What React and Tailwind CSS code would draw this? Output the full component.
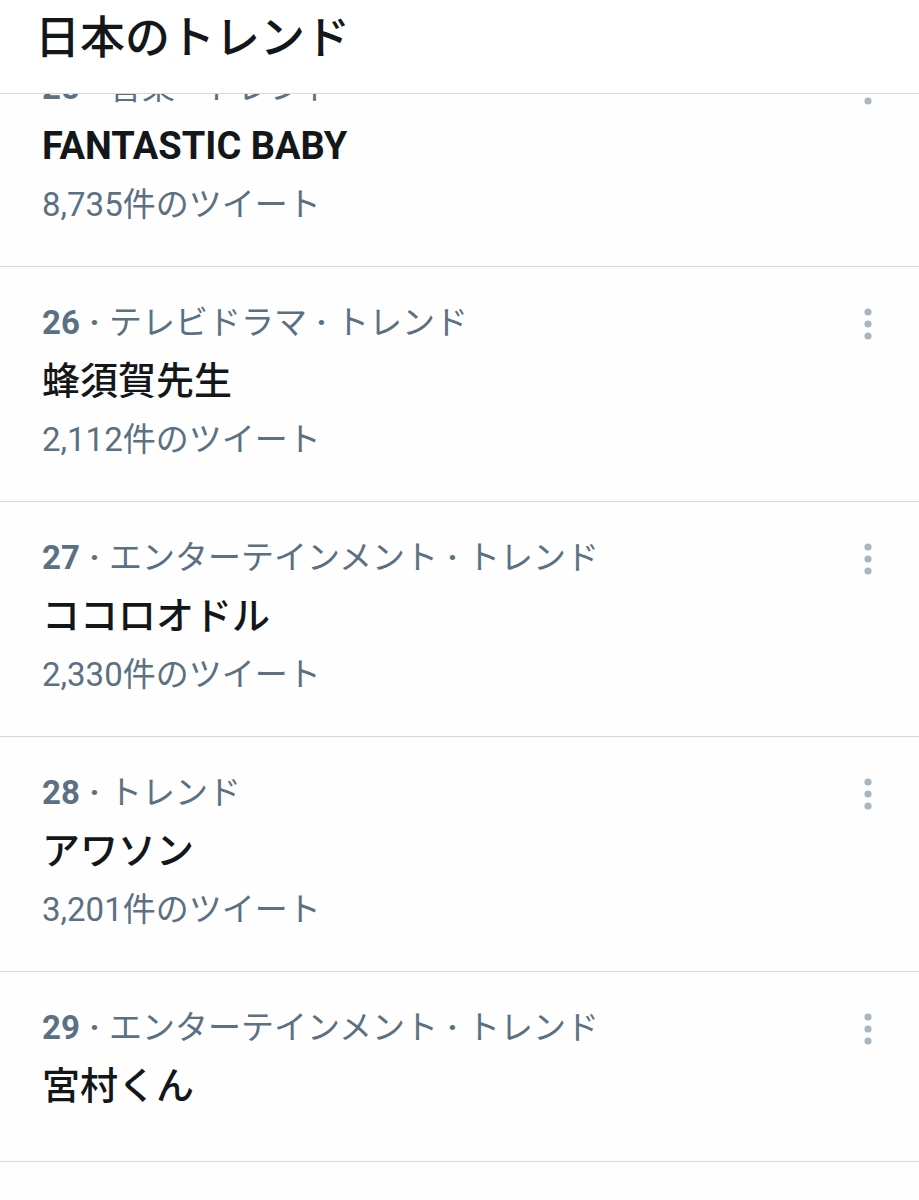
import React from "react";

const items = [
  { rank: "25", cat: ["音楽", "トレンド"], title: "FANTASTIC BABY", latin: true, count: "8,735件のツイート" },
  { rank: "26", cat: ["テレビドラマ", "トレンド"], title: "蜂須賀先生", count: "2,112件のツイート" },
  { rank: "27", cat: ["エンターテインメント", "トレンド"], title: "ココロオドル", count: "2,330件のツイート" },
  { rank: "28", cat: ["トレンド"], title: "アワソン", count: "3,201件のツイート" },
  { rank: "29", cat: ["エンターテインメント", "トレンド"], title: "宮村くん" },
];

const font = { fontFamily: '"Roboto", "Noto Sans CJK JP", sans-serif' };

function Dots() {
  return (
    <svg width="14" height="38" viewBox="0 0 14 38" className="block">
      <circle cx="7" cy="7" r="3.6" fill="#aab6bf" />
      <circle cx="7" cy="19" r="3.6" fill="#aab6bf" />
      <circle cx="7" cy="31" r="3.6" fill="#aab6bf" />
    </svg>
  );
}

function Sep() {
  return <span className="inline-block w-[29px] text-center font-bold">·</span>;
}

function Item({ it, first }) {
  return (
    <div
      className={`relative flex border-b border-[#cfd9de] pl-[42px] pr-[44px] ${first ? "-mt-[62px]" : ""}`}
    >
      <div className={`flex-1 flex flex-col pt-[36px] ${it.count ? "pb-[41px]" : "pb-[55px]"}`}>
        <div className="text-[33px] leading-[40px] text-[#5b7083] whitespace-nowrap">
          <span className="font-bold">{it.rank}</span>
          {it.cat.map((c, i) => (
            <React.Fragment key={i}>
              <Sep />
              <span>{c}</span>
            </React.Fragment>
          ))}
        </div>
        <div
          className={`mt-[18px] leading-[40px] text-[#14171a] whitespace-nowrap ${
            it.latin ? "text-[38px] font-bold" : "text-[38px] font-medium"
          }`}
        >
          {it.title}
        </div>
        {it.count && (
          <div className="mt-[19px] text-[33px] leading-[40px] text-[#5b7083] whitespace-nowrap">
            {it.count}
          </div>
        )}
      </div>
      <div className="pt-[38px]">
        <Dots />
      </div>
    </div>
  );
}

export default function App() {
  return (
    <div className="w-[919px] h-[1200px] bg-[#fefefe] flex flex-col overflow-hidden" style={font}>
      <div className="h-[94px] shrink-0 border-b border-[#cfd9de] bg-white flex items-center pl-[35px] pb-[16px]">
        <span className="text-[45px] font-medium text-[#14171a] leading-none">日本のトレンド</span>
      </div>
      <div className="flex-1 overflow-hidden">
        {items.map((it, i) => (
          <Item key={it.rank} it={it} first={i === 0} />
        ))}
      </div>
    </div>
  );
}
